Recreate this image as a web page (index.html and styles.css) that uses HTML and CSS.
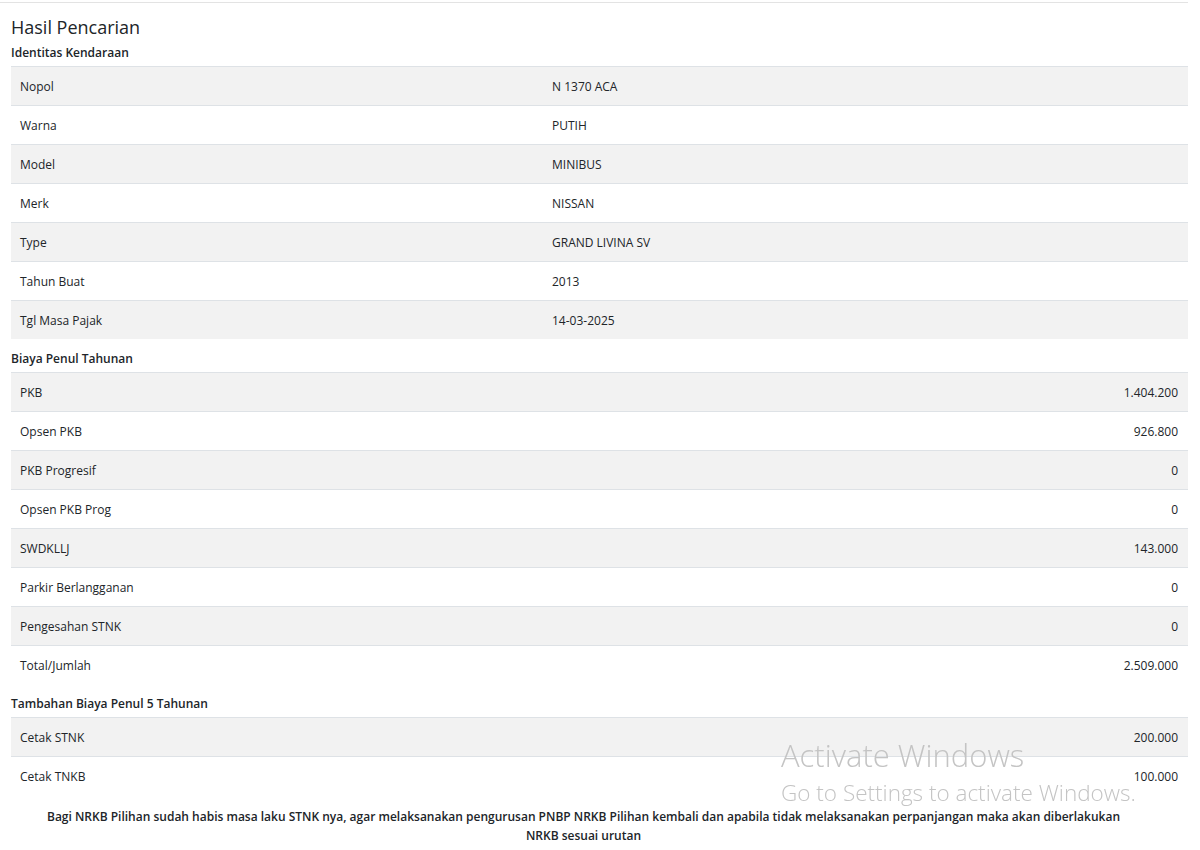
FILE: index.html
```html
<!DOCTYPE html>
<html lang="id">
<head>
  <meta charset="UTF-8">
  <title>Hasil Pencarian</title>
  <link rel="stylesheet" href="styles.css">
</head>
<body>
  <div class="page">
    <h1>Hasil Pencarian</h1>

    <!-- Identitas -->
    <h6>Identitas Kendaraan</h6>
    <table class="table-striped">
      <tr><td class="label">Nopol</td><td>N 1370 ACA</td></tr>
      <tr><td class="label">Warna</td><td>PUTIH</td></tr>
      <tr><td class="label">Model</td><td>MINIBUS</td></tr>
      <tr><td class="label">Merk</td><td>NISSAN</td></tr>
      <tr><td class="label">Type</td><td>GRAND LIVINA SV</td></tr>
      <tr><td class="label">Tahun Buat</td><td>2013</td></tr>
      <tr><td class="label">Tgl Masa Pajak</td><td>14-03-2025</td></tr>
    </table>

    <!-- Biaya tahunan -->
    <h6>Biaya Penul Tahunan</h6>
    <table class="table-striped">
      <tr><td>PKB</td><td class="num">1.404.200</td></tr>
      <tr><td>Opsen PKB</td><td class="num">926.800</td></tr>
      <tr><td>PKB Progresif</td><td class="num">0</td></tr>
      <tr><td>Opsen PKB Prog</td><td class="num">0</td></tr>
      <tr><td>SWDKLLJ</td><td class="num">143.000</td></tr>
      <tr><td>Parkir Berlangganan</td><td class="num">0</td></tr>
      <tr><td>Pengesahan STNK</td><td class="num">0</td></tr>
      <tr><td>Total/Jumlah</td><td class="num">2.509.000</td></tr>
    </table>

    <!-- Biaya 5 tahunan -->
    <h6>Tambahan Biaya Penul 5 Tahunan</h6>
    <table class="table-striped">
      <tr><td>Cetak STNK</td><td class="num">200.000</td></tr>
      <tr><td>Cetak TNKB</td><td class="num">100.000</td></tr>
    </table>

    <p class="note">Bagi NRKB Pilihan sudah habis masa laku STNK nya, agar melaksanakan pengurusan PNBP NRKB Pilihan kembali dan apabila tidak melaksanakan perpanjangan maka akan diberlakukan NRKB sesuai urutan</p>
  </div>

  <div class="watermark">
    <div class="wm-title">Activate Windows</div>
    <div class="wm-sub">Go to Settings to activate Windows.</div>
  </div>
</body>
</html>
```

FILE: styles.css
```css
body {
  margin: 0;
  font-family: "Open Sans", "Noto Sans", sans-serif;
  font-size: 12px;
  line-height: 18px;
  color: #212529;
  background: #fff;
}

.page {
  width: 1188px;
  box-sizing: border-box;
  margin-top: 2px;
  padding-left: 11px;
  border-top: 1px solid #e3e3e3;
}

h1 {
  font-size: 18px;
  font-weight: 500;
  line-height: 24px;
  margin: 12px 0 5px;
}

h6 {
  font-size: 12px;
  font-weight: 600;
  line-height: 18px;
  margin: 1px 0 4px;
}

table + h6 {
  margin-top: 11px;
}

/* Tables */
table {
  width: 100%;
  border-collapse: collapse;
}

td {
  padding: 11px 10px 9px 9px;
  border-top: 1px solid #dee2e6;
  vertical-align: top;
}

td.label {
  width: 513px;
}

td.num {
  text-align: right;
}

.table-striped tr:nth-child(odd) {
  background-color: #f2f2f2;
}

.note {
  margin: 12px 0 0;
  padding: 0 62px 0 30px;
  text-align: center;
  font-weight: 600;
  line-height: 19px;
}

/* Windows watermark */
.watermark {
  position: fixed;
  left: 781px;
  top: 736px;
  color: #c4c4c4;
  font-family: "Open Sans", sans-serif;
  font-weight: 300;
  pointer-events: none;
}

.wm-title {
  font-size: 31px;
  line-height: 38px;
}

.wm-sub {
  font-size: 22.5px;
  line-height: 26px;
  margin-top: 6px;
}
```
